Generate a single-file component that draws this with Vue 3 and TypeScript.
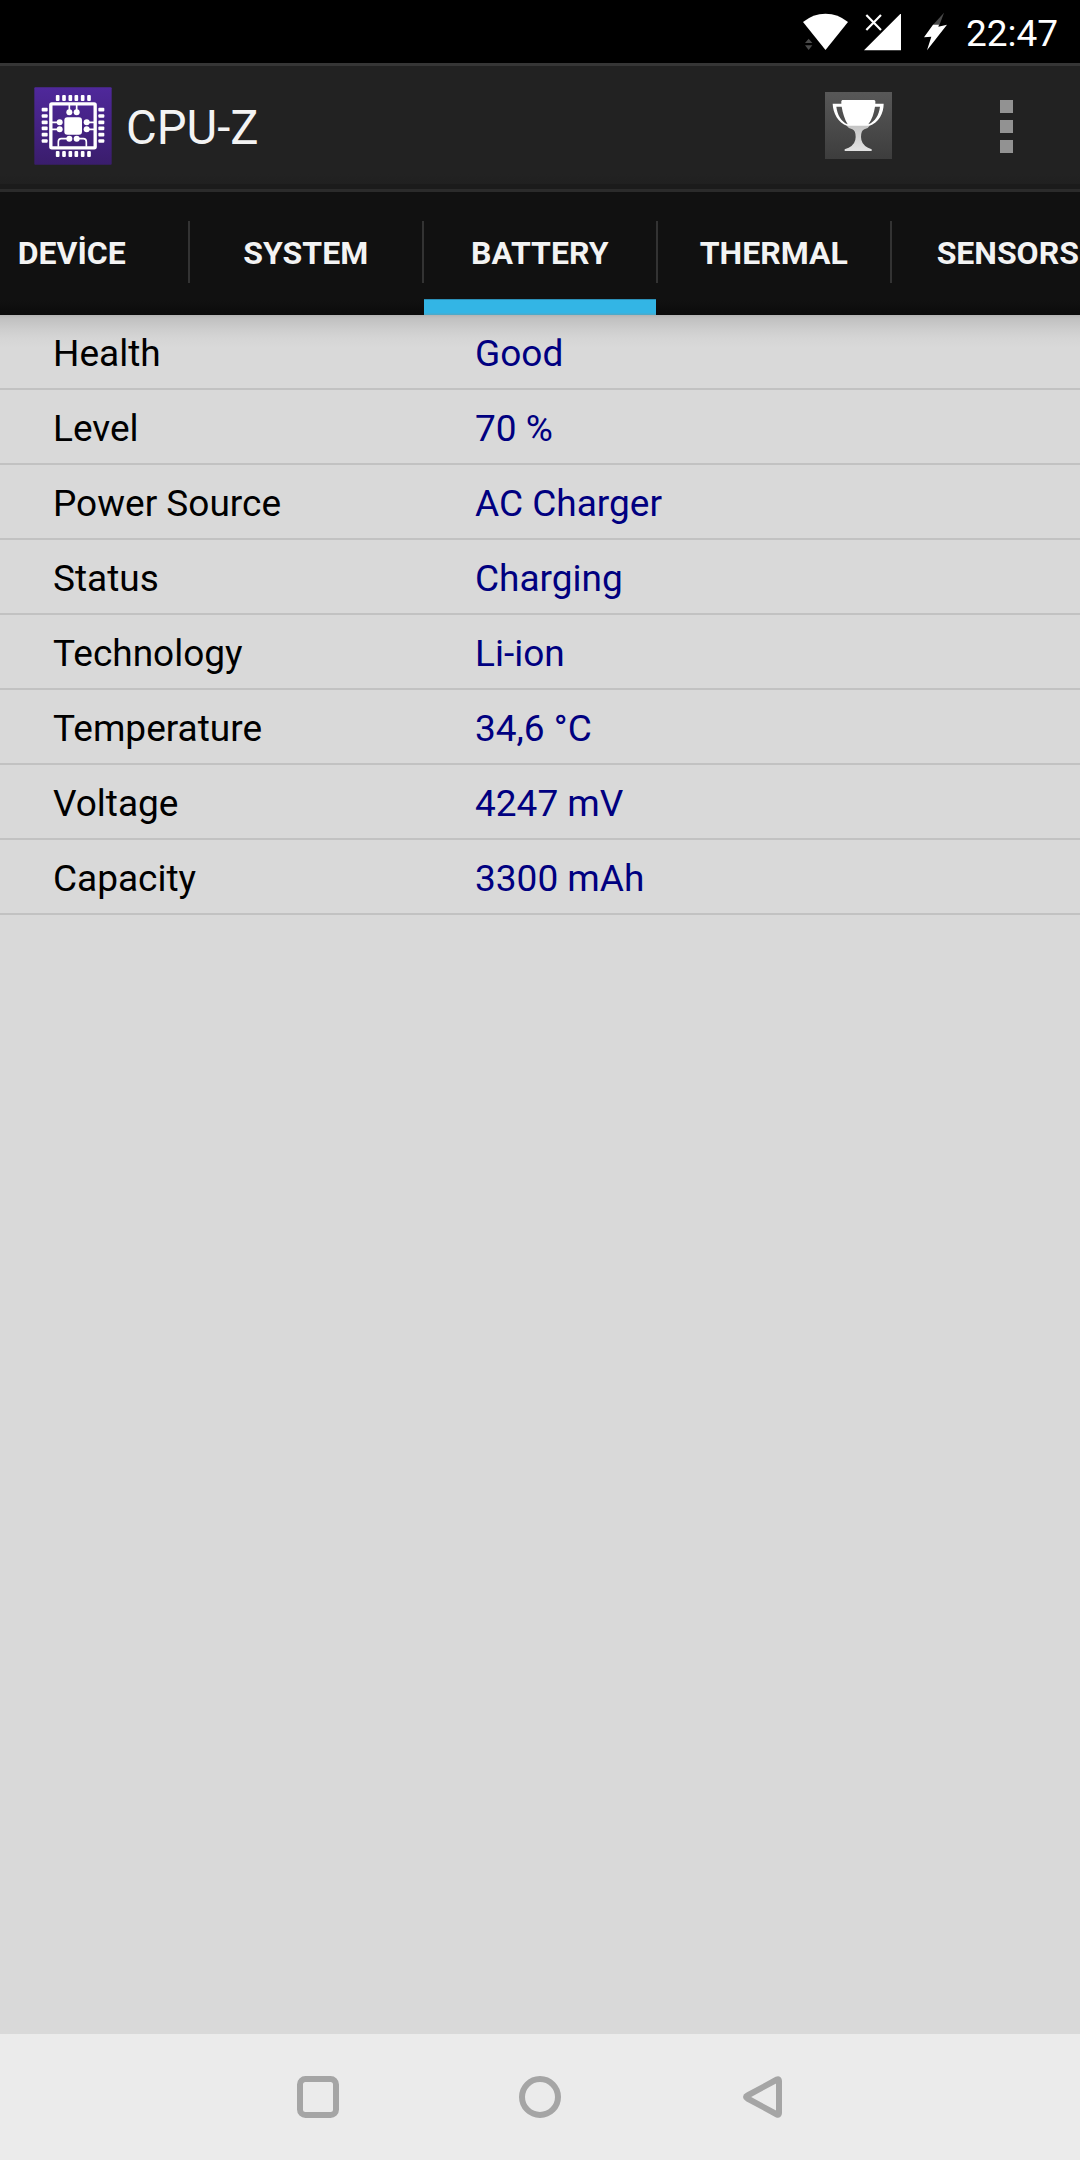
<script setup lang="ts">
interface InfoRow {
  label: string
  value: string
}

const tabs: string[] = ['DEVİCE', 'SYSTEM', 'BATTERY', 'THERMAL', 'SENSORS']
const activeTab = 'BATTERY'

const rows: InfoRow[] = [
  { label: 'Health', value: 'Good' },
  { label: 'Level', value: '70 %' },
  { label: 'Power Source', value: 'AC Charger' },
  { label: 'Status', value: 'Charging' },
  { label: 'Technology', value: 'Li-ion' },
  { label: 'Temperature', value: '34,6 °C' },
  { label: 'Voltage', value: '4247 mV' },
  { label: 'Capacity', value: '3300 mAh' },
]

const topPins = [108, 127, 146, 164, 183, 202]
const sidePins = [99, 118, 137, 155, 174, 193]
</script>

<template>
  <div class="screen">
    <div class="status-bar">
      <svg class="wifi" viewBox="39 36 135 117">
        <path d="M39 66Q69 41 106.500 41T174 66L106.500 150Z" fill="#fff" />
        <path d="M45 129L56 116L67 129ZM45 136L56 150L67 136Z" fill="#4a4a4a" />
      </svg>
      <svg class="signal" viewBox="222 36 112 117">
        <path d="M334 39V151H222Z" fill="#fff" />
        <path d="M229 45L273 90M273 45L229 90" stroke="#fff" stroke-width="6.500" />
      </svg>
      <svg class="bolt" viewBox="402 36 69 117">
        <path d="M462 38L448 76L428 76Z" fill="#4a4a4a" />
        <path d="M429 74H447L445 80L471 74L411 151L424 110L402 112Z" fill="#fff" />
      </svg>
      <span class="clock">22:47</span>
    </div>

    <div class="action-bar">
      <svg class="app-icon" viewBox="42 36 234 234">
        <defs>
          <linearGradient id="purple" x1="0" y1="0" x2="0" y2="1">
            <stop offset="0" stop-color="#4f289b" />
            <stop offset="1" stop-color="#3a1d6c" />
          </linearGradient>
        </defs>
        <rect x="43" y="37" width="232" height="232" rx="3" fill="url(#purple)" />
        <g fill="#fff">
          <template v-for="x in topPins" :key="'v' + x">
            <rect :x="x - 0.5" y="60" width="11" height="18" rx="3" />
            <rect :x="x - 0.5" y="228" width="11" height="18" rx="3" />
          </template>
          <template v-for="y in sidePins" :key="'h' + y">
            <rect x="65" :y="y - 0.5" width="18" height="11" rx="3" />
            <rect x="235" :y="y - 0.5" width="18" height="11" rx="3" />
          </template>
          <rect x="133" y="127" width="53" height="52" rx="9" />
          <circle cx="148" cy="112" r="9" />
          <circle cx="170" cy="112" r="9" />
          <circle cx="148" cy="191" r="9" />
          <circle cx="170" cy="191" r="9" />
          <circle cx="119" cy="142" r="9" />
          <circle cx="119" cy="163" r="9" />
          <circle cx="200" cy="142" r="9" />
          <circle cx="200" cy="163" r="9" />
        </g>
        <g fill="none" stroke="#fff">
          <rect x="92.500" y="86.500" width="133" height="132" rx="3" stroke-width="10" />
          <path
            d="M148 90V112M170 90V112M96 142H119M96 163H119M200 142H222M200 163H222M148 191H124Q115 191 115 200V215M170 191H190Q199 191 199 200V215"
            stroke-width="5"
          />
        </g>
      </svg>
      <h1 class="title">CPU-Z</h1>
      <svg class="trophy" viewBox="45 36 201 201">
        <defs>
          <linearGradient id="tile" x1="0" y1="0" x2="0" y2="1">
            <stop offset="0" stop-color="#585858" />
            <stop offset="1" stop-color="#3d3d3d" />
          </linearGradient>
          <linearGradient id="stem" x1="0" y1="0" x2="0" y2="1">
            <stop offset="0" stop-color="#c4c4c4" />
            <stop offset="1" stop-color="#e2e2e2" />
          </linearGradient>
        </defs>
        <rect x="45" y="36" width="201" height="201" fill="url(#tile)" />
        <path
          fill="#fff"
          fill-rule="evenodd"
          d="M97 60H193L196 63V71H221C221 99 207 128 177 138H112C84 128 69 99 68 71H94V63ZM79 80C82 105 93 124 113 133C104 118 98 99 95 80ZM195 80C192 100 186 118 175 133C196 124 207 105 210 80Z"
        />
        <path
          fill="url(#stem)"
          d="M110 137H179Q175 145 163 148Q153 152 153 171Q153 193 174 203L185 208V213H104V208L116 203Q137 193 137 171Q137 152 127 148Q115 145 110 137Z"
        />
      </svg>
      <div class="overflow"><i></i><i></i><i></i></div>
    </div>

    <div class="tab-bar">
      <div
        v-for="tab in tabs"
        :key="tab"
        class="tab"
        :class="{ active: tab === activeTab }"
      >
        <span>{{ tab }}</span>
      </div>
    </div>

    <div class="content">
      <div v-for="row in rows" :key="row.label" class="row">
        <span class="label">{{ row.label }}</span>
        <span class="value">{{ row.value }}</span>
      </div>
    </div>

    <div class="nav-bar">
      <svg width="42" height="42" viewBox="0 0 42 42">
        <rect x="3" y="3" width="36" height="36" rx="5.500" />
      </svg>
      <svg width="42" height="42" viewBox="0 0 42 42">
        <circle cx="21" cy="21" r="18" />
      </svg>
      <svg class="back" width="39" height="44" viewBox="0 0 39 44">
        <path d="M34 4.500Q36 3.500 36 6V38Q36 40.500 34 39.500L4.500 23.500Q1.500 22 4.500 20.500Z" />
      </svg>
    </div>
  </div>
</template>

<style>
body {
  margin: 0;
}
</style>

<style scoped>
.screen {
  display: flex;
  flex-direction: column;
  width: 1080px;
  height: 2160px;
  overflow: hidden;
  background: #d9d9d9;
  font-family: Roboto, 'Liberation Sans', sans-serif;
}

svg {
  display: block;
  flex: none;
}

.status-bar {
  display: flex;
  flex: none;
  box-sizing: border-box;
  height: 63px;
  padding: 12px 21px 0 803px;
  background: #000;
}

.wifi {
  width: 45px;
  height: 39px;
}

.signal {
  width: 37.3px;
  height: 39px;
  margin-left: 16px;
}

.bolt {
  width: 23px;
  height: 39px;
  margin-left: 22.7px;
}

.clock {
  margin-left: 19px;
  color: #fff;
  font-size: 37px;
  line-height: 44px;
  white-space: nowrap;
}

.action-bar {
  display: flex;
  flex: none;
  align-items: flex-start;
  box-sizing: border-box;
  height: 129px;
  padding-left: 34px;
  border-top: 3px solid #363636;
  border-bottom: 3px solid #2b2b2b;
  background: linear-gradient(#222 0 108px, #202020 118px, #1b1b1b 118px);
}

.app-icon {
  width: 78px;
  height: 78px;
  margin-top: 21px;
}

.title {
  width: 200px;
  margin: 34px 0 0 14px;
  color: #f3f3f3;
  font-size: 47.25px;
  font-weight: 400;
  line-height: 56px;
}

.trophy {
  width: 67px;
  height: 67px;
  margin: 26px 0 0 499px;
}

.overflow {
  display: flex;
  flex-direction: column;
  gap: 7px;
  margin: 34px 0 0 108px;
}

.overflow i {
  width: 13px;
  height: 13px;
  background: #929292;
}

.tab-bar {
  display: flex;
  flex: none;
  height: 123px;
  margin-left: -46px;
  background: linear-gradient(#111 0 108px, #0b0b0b);
}

.tab {
  position: relative;
  display: flex;
  flex: none;
  justify-content: center;
  box-sizing: border-box;
  width: 234px;
  padding: 43px 0 0 1.5px;
  color: #f3f3f3;
  font-size: 32px;
  font-weight: 700;
  line-height: 36px;
}

.tab::before {
  position: absolute;
  top: 29px;
  left: 0;
  width: 2px;
  height: 62px;
  background: #333;
  content: '';
}

.tab.active::after {
  position: absolute;
  right: 0;
  bottom: 0;
  left: 2px;
  height: 16px;
  background: linear-gradient(#2b90b8 0 1px, #33b5e5 1px 14px, #4baacb 15px);
  content: '';
}

.content {
  flex: 1;
  background: linear-gradient(#b4b4b4 0, #c0c0c0 3px, #cdcdcd 14px, #d5d5d5 23px, #d9d9d9 33px);
}

.row {
  display: flex;
  box-sizing: border-box;
  height: 75px;
  padding: 17px 0 0 53px;
  border-bottom: 2px solid #c2c2c2;
  font-size: 37px;
  line-height: 44px;
}

.label {
  width: 422px;
  color: #000;
}

.value {
  color: #000080;
}

.nav-bar {
  display: flex;
  flex: none;
  align-items: center;
  box-sizing: border-box;
  height: 126px;
  padding-left: 297px;
  gap: 180px;
  background: #ebebeb;
}

.nav-bar svg {
  fill: none;
  stroke: #a5a5a5;
  stroke-width: 6;
}

.nav-bar .back {
  margin-left: 2px;
}
</style>
